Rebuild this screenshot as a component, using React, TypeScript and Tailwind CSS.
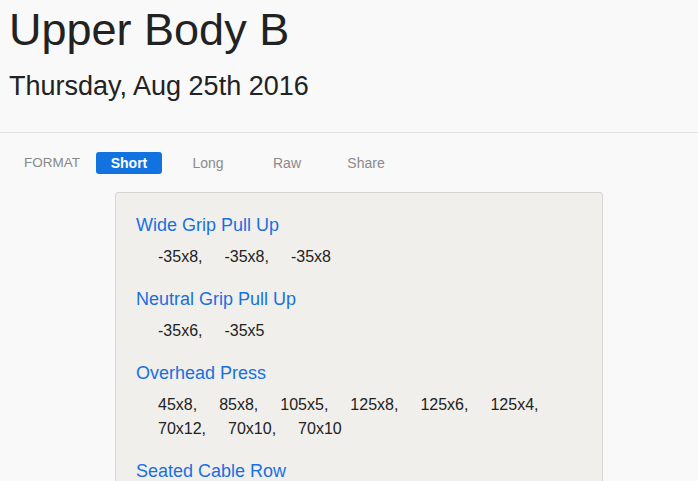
import { FC } from 'react'

const exercises = [
  { name: 'Wide Grip Pull Up', sets: ['-35x8', '-35x8', '-35x8'] },
  { name: 'Neutral Grip Pull Up', sets: ['-35x6', '-35x5'] },
  {
    name: 'Overhead Press',
    sets: ['45x8', '85x8', '105x5', '125x8', '125x6', '125x4', '70x12', '70x10', '70x10'],
  },
  { name: 'Seated Cable Row', sets: [] as string[] },
]

const formats = ['Short', 'Long', 'Raw', 'Share']

const App: FC = () => {
  return (
    <div
      className="h-[481px] overflow-hidden bg-[#f8f9f8] text-[#222]"
      style={{ fontFamily: '"Liberation Sans", Arial, sans-serif' }}
    >
      {/* Header */}
      <div className="px-[9px] pt-[6px]">
        <h1 className="text-[45px] leading-[48px] font-normal">Upper Body B</h1>
        <h2 className="mt-[16px] text-[27px] leading-[32px] font-normal">Thursday, Aug 25th 2016</h2>
      </div>
      <div className="mt-[30px] h-px bg-[#e1e2e1]" />

      {/* Format tabs */}
      <div className="flex items-center mt-[19px] pl-[24px]">
        <span className="text-[13.5px] text-[#888] w-[72px]">FORMAT</span>
        <div className="flex gap-[13px]">
          {formats.map((f, i) => (
            <button
              key={f}
              className={
                i === 0
                  ? 'w-[66px] h-[22px] rounded-[3px] bg-[#1273e0] text-white text-[14px] font-bold'
                  : 'w-[66px] h-[22px] text-[#8a8a8a] text-[14px]'
              }
            >
              {f}
            </button>
          ))}
        </div>
      </div>

      {/* Workout card */}
      <div className="ml-[115px] mt-[18px] w-[488px] bg-[#f0efeb] border border-[#d6d6d2] rounded-[3px] px-[20px] pt-[20px] pb-4">
        {exercises.map((ex) => (
          <div key={ex.name} className="mb-[18px]">
            <div className="text-[18px] leading-[24px] text-[#1a6fdf]">{ex.name}</div>
            {ex.sets.length > 0 && (
              <div className="mt-[8px] pl-[22px] flex flex-wrap gap-x-[22px] text-[16px] leading-[24px] text-[#222]">
                {ex.sets.map((s, i) => (
                  <span key={i}>
                    {s}
                    {i < ex.sets.length - 1 ? ',' : ''}
                  </span>
                ))}
              </div>
            )}
          </div>
        ))}
      </div>
    </div>
  )
}

export default App
